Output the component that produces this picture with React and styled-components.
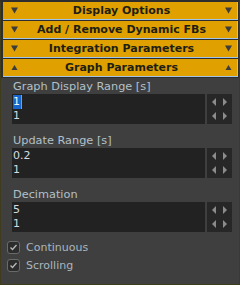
import React from "react";
import styled, { createGlobalStyle } from "styled-components";

const GlobalStyle = createGlobalStyle`
  html, body {
    margin: 0;
    padding: 0;
    background: #3f3f3f;
  }
  * {
    box-sizing: border-box;
  }
`;

const sections = [
  { title: "Display Options", open: false },
  { title: "Add / Remove Dynamic FBs", open: false },
  { title: "Integration Parameters", open: false },
  { title: "Graph Parameters", open: true },
];

const fields = [
  { label: "Graph Display Range [s]", value: "1", step: "1", selected: true },
  { label: "Update Range [s]", value: "0.2", step: "1" },
  { label: "Decimation", value: "5", step: "1" },
];

const options = ["Continuous", "Scrolling"];

function Arrow({ up }) {
  return up ? (
    <svg width="7" height="7" viewBox="0 0 7 7">
      <polygon points="3.5,1 6.5,6 0.5,6" fill="#3c3c3c" />
    </svg>
  ) : (
    <svg width="7" height="7" viewBox="0 0 7 7">
      <polygon points="0,0.5 7,0.5 3.5,6.5" fill="#3c3c3c" />
    </svg>
  );
}

function SpinArrow({ dir }) {
  return (
    <svg width="4" height="8" viewBox="0 0 4 8">
      {dir === "left" ? (
        <polygon points="4,0 4,8 0,4" fill="#8c8c8c" />
      ) : (
        <polygon points="0,0 0,8 4,4" fill="#8c8c8c" />
      )}
    </svg>
  );
}

export default function App() {
  return (
    <>
      <GlobalStyle />
      <Window>
        <Headers>
          {sections.map((s) => (
            <Header key={s.title}>
              <Arrow up={s.open} />
              <HeaderTitle>{s.title}</HeaderTitle>
              <Arrow up={s.open} />
            </Header>
          ))}
        </Headers>
        <Fields>
          {fields.map((f) => (
            <Field key={f.label}>
              <FieldLabel>{f.label}</FieldLabel>
              <InputRow>
                <InputBox>
                  <InputLine>
                    {f.selected ? (
                      <>
                        <Selected>{f.value}</Selected>
                        <Caret />
                      </>
                    ) : (
                      f.value
                    )}
                  </InputLine>
                  <InputLine>{f.step}</InputLine>
                </InputBox>
                <Spinner>
                  <SpinRow>
                    <SpinArrow dir="left" />
                    <SpinArrow dir="right" />
                  </SpinRow>
                  <SpinRow>
                    <SpinArrow dir="left" />
                    <SpinArrow dir="right" />
                  </SpinRow>
                </Spinner>
              </InputRow>
            </Field>
          ))}
        </Fields>
        <Options>
          {options.map((o) => (
            <CheckRow key={o}>
              <CheckBox>
                <svg width="9" height="9" viewBox="0 0 9 9">
                  <polyline
                    points="1.5,4.5 3.5,6.5 7.5,2"
                    fill="none"
                    stroke="#b8b8b8"
                    strokeWidth="1.3"
                  />
                </svg>
              </CheckBox>
              <CheckLabel>{o}</CheckLabel>
            </CheckRow>
          ))}
        </Options>
      </Window>
    </>
  );
}

const Window = styled.div`
  width: 240px;
  height: 285px;
  background: #3f3f3f;
  border: 1px solid #3e3c1c;
  border-top: 2px solid #2e2e2e;
  font-family: "DejaVu Sans", Verdana, sans-serif;
  overflow: hidden;
`;

const Headers = styled.div`
  display: flex;
  flex-direction: column;
  padding: 0 1px 0 2px;
  background: #2e2e2e;
`;

const Header = styled.div`
  height: 18px;
  display: flex;
  align-items: center;
  justify-content: space-between;
  padding: 0 5px 0 8px;
  background: #dfa000;
  border-right: 1px solid #a2c4e6;
  border-bottom: 1px solid #a2c4e6;
  margin-bottom: 1px;
  svg {
    flex: none;
  }
`;

const HeaderTitle = styled.span`
  flex: 1;
  text-align: center;
  font-weight: bold;
  font-size: 11px;
  line-height: 17px;
  color: #1e1e14;
  white-space: nowrap;
`;

const Fields = styled.div`
  display: flex;
  flex-direction: column;
  padding: 1px 7px 0 11px;
`;

const Field = styled.div`
  display: flex;
  flex-direction: column;
  margin-bottom: 9px;
  &:last-child {
    margin-bottom: 6px;
  }
`;

const FieldLabel = styled.div`
  height: 15px;
  line-height: 15px;
  font-size: 11.3px;
  padding-left: 1px;
  color: #b3c0c8;
  white-space: nowrap;
`;

const InputRow = styled.div`
  display: flex;
  gap: 2px;
  height: 30px;
`;

const InputBox = styled.div`
  flex: 1;
  background: #222222;
  padding: 1px 0 0 1px;
  display: flex;
  flex-direction: column;
`;

const InputLine = styled.div`
  height: 14px;
  line-height: 14px;
  font-size: 11px;
  color: #d4dce2;
  display: flex;
  align-items: center;
`;

const Selected = styled.span`
  background: #1766cc;
  color: #f2f6fa;
  padding: 0 1px 0 0;
  line-height: 14px;
`;

const Caret = styled.span`
  width: 1px;
  height: 14px;
  background: #e08a28;
`;

const Spinner = styled.div`
  width: 25px;
  background: #272727;
  display: flex;
  flex-direction: column;
  justify-content: space-around;
  padding: 1px 0;
`;

const SpinRow = styled.div`
  display: flex;
  justify-content: center;
  gap: 7px;
  height: 14px;
  align-items: center;
`;

const Options = styled.div`
  display: flex;
  flex-direction: column;
  padding-left: 6px;
`;

const CheckRow = styled.div`
  height: 18px;
  display: flex;
  align-items: center;
  gap: 6px;
`;

const CheckBox = styled.div`
  width: 13px;
  height: 13px;
  border: 1px solid #6a6a6a;
  border-radius: 3px;
  background: #2c2c2c;
  display: flex;
  align-items: center;
  justify-content: center;
`;

const CheckLabel = styled.span`
  font-size: 11px;
  color: #aab6be;
`;
